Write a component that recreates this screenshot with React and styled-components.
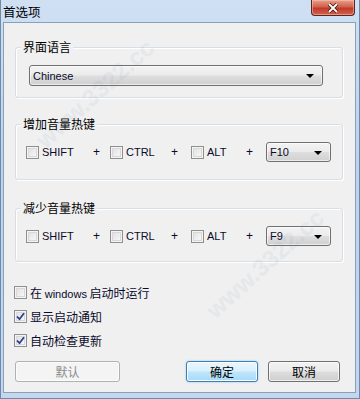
import React from "react";
import styled, { createGlobalStyle } from "styled-components";

const Global = createGlobalStyle`
  html, body { margin: 0; padding: 0; background: #fff; }
  body { width: 360px; height: 399px; overflow: hidden; }
  * { box-sizing: border-box; }
`;

const CN = `"Noto Sans CJK SC", "Noto Sans", sans-serif`;
const LAT = `"Liberation Sans", "Noto Sans CJK SC", sans-serif`;

const Window = styled.div`
  position: relative;
  width: 360px;
  height: 399px;
  background: linear-gradient(180deg, #cfe0f3 0%, #bcd3ec 40%, #c3d8ef 100%);
  border: 1px solid #6f8aa8;
  border-top: none;
  display: flex;
  flex-direction: column;
  overflow: hidden;
`;

const TitleBar = styled.div`
  height: 22px;
  display: flex;
  justify-content: space-between;
  align-items: flex-start;
  padding-left: 2px;
  padding-right: 4px;
`;

const Title = styled.div`
  font-family: ${CN};
  font-size: 12.5px;
  line-height: 22px;
  color: #000;
  padding-top: 1px;
`;

const Close = styled.div`
  width: 44px;
  height: 16px;
  border: 1px solid #5a2420;
  border-top: none;
  border-radius: 0 0 4px 4px;
  background: linear-gradient(180deg, #e7a08d 0%, #d2614a 45%, #c0392b 55%, #d0634a 100%);
  display: flex;
  align-items: center;
  justify-content: center;
  box-shadow: inset 0 0 0 1px rgba(255, 200, 190, 0.5);
`;

const Client = styled.div`
  margin: 0 3px 0 2px;
  height: 371px;
  background: #f0f0f0;
  border: 1px solid #8a9fb8;
  padding: 24px 12px 0 11px;
  display: flex;
  flex-direction: column;
`;

const Group = styled.div`
  position: relative;
  height: ${(p) => p.h}px;
  margin-top: ${(p) => p.mt || 0}px;
  border: 1px solid #d5dfe5;
  border-radius: 3px;
  box-shadow: inset 1px 1px 0 #fff, 1px 1px 0 #fff;
  padding: ${(p) => p.pt}px 0 0 ${(p) => p.pl}px;
`;

const Legend = styled.div`
  position: absolute;
  left: 5px;
  top: -10px;
  padding: 0 2px;
  background: #f0f0f0;
  font-family: ${CN};
  font-size: 12px;
  line-height: 18px;
  color: #000;
`;

const Combo = styled.div`
  width: ${(p) => p.w}px;
  height: ${(p) => p.h}px;
  border: 1px solid #707070;
  border-radius: 3px;
  background: linear-gradient(180deg, #f3f3f3 0%, #ebebeb 48%, #dedede 52%, #d0d0d0 100%);
  box-shadow: inset 0 0 0 1px rgba(255, 255, 255, 0.6);
  display: flex;
  align-items: center;
  justify-content: space-between;
  padding: 0 8px 0 3px;
  font-family: ${LAT};
  font-size: 11px;
  color: #0a0a2a;
`;

const Arrow = styled.span`
  width: 0;
  height: 0;
  border-left: 4px solid transparent;
  border-right: 4px solid transparent;
  border-top: 4px solid #000;
  margin-top: 1px;
`;

const HotRow = styled.div`
  display: flex;
  align-items: center;
`;

const CheckItem = styled.div`
  width: ${(p) => (p.w ? `${p.w}px` : "auto")};
  display: flex;
  align-items: center;
  gap: ${(p) => p.gap || 3}px;
  font-family: ${(p) => (p.cn ? CN : LAT)};
  font-size: ${(p) => (p.cn ? 12 : 11)}px;
  color: #0a0a2a;
  height: ${(p) => p.h || 20}px;
`;

const Latin = styled.span`
  font-family: ${LAT};
  font-size: 11px;
`;

const Box = styled.span`
  width: 13px;
  height: 13px;
  flex: none;
  border: 1px solid #8e8f8f;
  background: linear-gradient(135deg, #dcdcdc 0%, #f0f0f0 60%, #fbfbfb 100%);
  box-shadow: inset 0 0 0 1px #f4f4f4, inset 0 0 0 2px #d8d8d8;
  display: flex;
  align-items: center;
  justify-content: center;
`;

const Plus = styled.span`
  width: ${(p) => p.w}px;
  font-family: ${LAT};
  font-size: 12px;
  color: #0a0a2a;
`;

const Options = styled.div`
  margin-top: 20px;
  display: flex;
  flex-direction: column;
  gap: 4px;
  margin-left: -1px;
`;

const Buttons = styled.div`
  margin-top: 11px;
  display: flex;
  align-items: center;
`;

const Button = styled.div`
  width: ${(p) => p.w}px;
  height: 21px;
  margin-left: ${(p) => p.ml || 0}px;
  border: 1px solid ${(p) => (p.disabled ? "#adb2b5" : p.primary ? "#3c7fb1" : "#707070")};
  border-radius: 3px;
  background: ${(p) =>
    p.disabled
      ? "#f4f4f4"
      : p.primary
      ? "linear-gradient(180deg, #eaf6fd 0%, #d9f0fc 48%, #bee6fd 52%, #a7d9f5 100%)"
      : "linear-gradient(180deg, #f2f2f2 0%, #ebebeb 48%, #dddddd 52%, #cfcfcf 100%)"};
  box-shadow: ${(p) =>
    p.primary ? "inset 0 0 0 1px #fff, 0 0 2px #7ec3f3" : "inset 0 0 0 1px rgba(255,255,255,0.7)"};
  display: flex;
  align-items: center;
  justify-content: center;
  font-family: ${CN};
  font-size: 12px;
  color: ${(p) => (p.disabled ? "#8d8d8d" : "#000")};
`;

const Watermark = styled.div`
  position: absolute;
  left: ${(p) => p.x}px;
  top: ${(p) => p.y}px;
  transform: rotate(-42deg);
  font-family: "Liberation Sans", sans-serif;
  font-weight: bold;
  font-size: 24px;
  color: #6a88b8;
  opacity: 0.08;
  pointer-events: none;
  white-space: nowrap;
`;

const Check = () => (
  <svg width="9" height="9" viewBox="0 0 9 9">
    <path d="M1 4.5 L3.5 7.2 L8 1.2" fill="none" stroke="#2b3f8f" strokeWidth="1.8" />
  </svg>
);

const CheckBox = ({ checked, children, ...rest }) => (
  <CheckItem {...rest}>
    <Box>{checked && <Check />}</Box>
    <span>{children}</span>
  </CheckItem>
);

const HotkeyGroup = ({ title, keyName, mt, h }) => (
  <Group h={h} mt={mt} pt={17} pl={10}>
    <Legend>{title}</Legend>
    <HotRow>
      <CheckBox w={67}>SHIFT</CheckBox>
      <Plus w={17}>+</Plus>
      <CheckBox w={61}>CTRL</CheckBox>
      <Plus w={20}>+</Plus>
      <CheckBox w={55}>ALT</CheckBox>
      <Plus w={20}>+</Plus>
      <Combo w={65} h={20}>
        <span>{keyName}</span>
        <Arrow />
      </Combo>
    </HotRow>
  </Group>
);

export default function App() {
  return (
    <>
      <Global />
      <Window>
        <TitleBar>
          <Title>首选项</Title>
          <Close>
            <svg width="12" height="10" viewBox="0 0 12 10">
              <path d="M2 1 L10 9 M10 1 L2 9" stroke="#3a1410" strokeWidth="3.4" />
              <path d="M2 1 L10 9 M10 1 L2 9" stroke="#ffffff" strokeWidth="1.8" />
            </svg>
          </Close>
        </TitleBar>
        <Client>
          <Group h={51} pt={17} pl={13}>
            <Legend>界面语言</Legend>
            <Combo w={294} h={21}>
              <span>Chinese</span>
              <Arrow />
            </Combo>
          </Group>
          <HotkeyGroup title="增加音量热键" keyName="F10" mt={26} h={56} />
          <HotkeyGroup title="减少音量热键" keyName="F9" mt={28} h={54} />
          <Options>
            <CheckBox cn="1" h={20}>
              在 <Latin>windows</Latin> 启动时运行
            </CheckBox>
            <CheckBox cn="1" checked h={20}>显示启动通知</CheckBox>
            <CheckBox cn="1" checked h={20}>自动检查更新</CheckBox>
          </Options>
          <Buttons>
            <Button w={105} disabled>默认</Button>
            <Button w={72} ml={66} primary>确定</Button>
            <Button w={72} ml={10}>取消</Button>
          </Buttons>
        </Client>
        <Watermark x={20} y={80}>www.3322.cc</Watermark>
        <Watermark x={190} y={250}>www.3322.cc</Watermark>
      </Window>
    </>
  );
}
